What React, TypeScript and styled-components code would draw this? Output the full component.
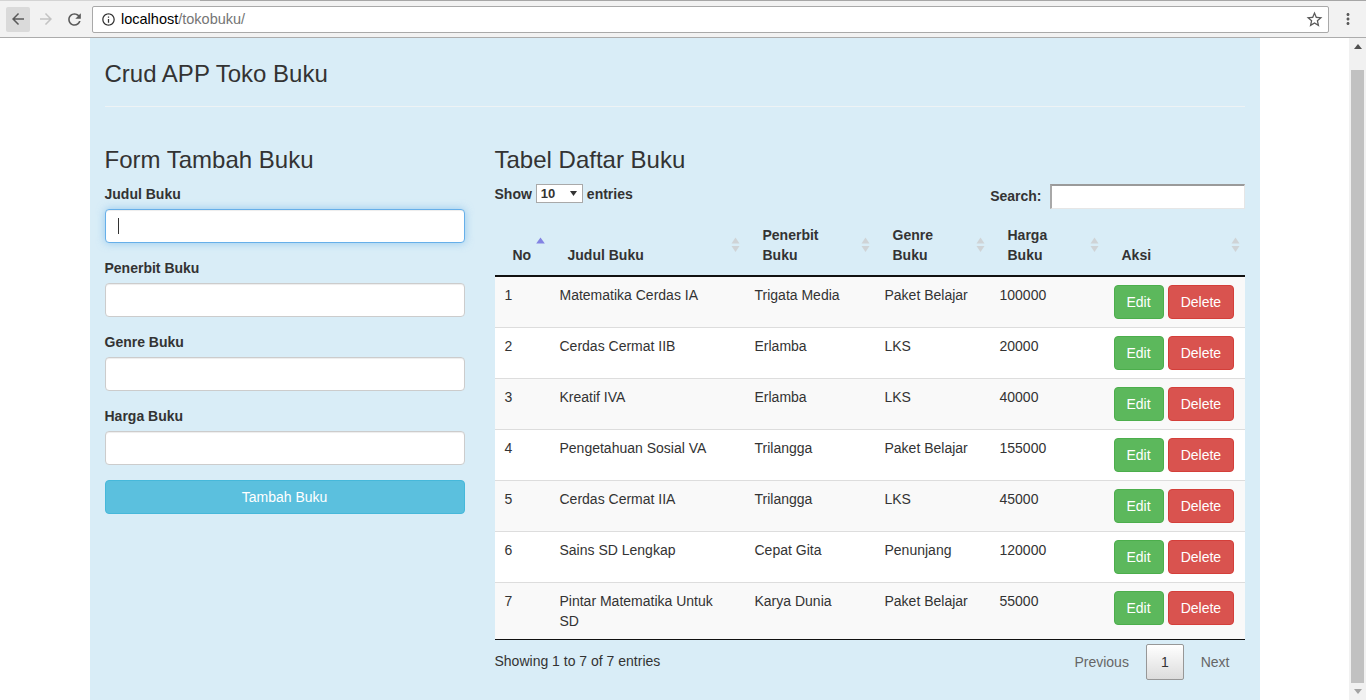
import React from 'react';
import styled, { createGlobalStyle } from 'styled-components';

const GlobalStyle = createGlobalStyle`
  html, body { margin: 0; padding: 0; height: 100%; overflow: hidden; }
  body {
    font-family: "Liberation Sans", Arial, Helvetica, sans-serif;
    font-size: 14px;
    line-height: 1.42857143;
    color: #333;
    background: #fff;
  }
  * { box-sizing: border-box; }
`;

/* ---------- browser chrome ---------- */
const Screen = styled.div`
  width: 1366px;
  height: 700px;
  display: flex;
  flex-direction: column;
  overflow: hidden;
`;

const TabEdge = styled.div`
  height: 1px;
  flex: none;
  background: linear-gradient(to right, #d4d4d4 0 200px, #a6a6a6 200px);
`;

const Toolbar = styled.div`
  height: 37px;
  flex: none;
  display: flex;
  align-items: center;
  padding: 0 6px;
  background: #f2f2f2;
  border-bottom: 1px solid #acacac;
`;

const NavButton = styled.div<{ $hover?: boolean }>`
  width: 24px;
  height: 25px;
  margin-right: 4px;
  border-radius: 2px;
  display: flex;
  align-items: center;
  justify-content: center;
  background: ${p => (p.$hover ? '#dadada' : 'transparent')};
`;

const Omnibox = styled.div`
  flex: 1;
  height: 27px;
  margin-left: 2px;
  margin-right: 7px;
  display: flex;
  align-items: center;
  padding: 0 4px 0 8px;
  background: #fff;
  border: 1px solid #a9a9a9;
  border-radius: 2px;
  font-size: 14.5px;
`;

const Url = styled.span`
  margin-left: 5px;
  flex: 1;
  color: #000;
`;

const UrlPath = styled.span`
  color: #757575;
`;

const MenuButton = styled.div`
  width: 24px;
  height: 25px;
  display: flex;
  align-items: center;
  justify-content: center;
`;

/* ---------- page area ---------- */
const Main = styled.div`
  flex: 1;
  display: flex;
  min-height: 0;
`;

const Viewport = styled.div`
  flex: 1;
  display: flex;
  justify-content: center;
  background: #fff;
  overflow: hidden;
`;

const Scrollbar = styled.div`
  width: 17px;
  flex: none;
  display: flex;
  flex-direction: column;
  align-items: center;
  background: #f1f1f1;
`;

const ScrollArrow = styled.div`
  height: 17px;
  width: 17px;
  display: flex;
  align-items: center;
  justify-content: center;
  flex: none;
`;

const ScrollThumb = styled.div`
  width: 13px;
  margin-top: 15px;
  height: 613px;
  background: #c1c1c1;
  flex: none;
`;

const ScrollSpacer = styled.div`
  flex: 1;
`;

const Container = styled.div`
  width: 1170px;
  flex: none;
  background: #d9edf7;
  padding: 0 15px;
`;

const PageHeader = styled.div`
  padding: 23px 0 19px;
  border-bottom: 1px solid #eef3f5;
`;

const H3 = styled.h3`
  margin: 0;
  font-size: 24px;
  font-weight: 500;
  line-height: 1.1;
  color: #333;
`;

const SectionTitle = styled(H3)`
  margin-bottom: 10px;
`;

const Row = styled.div`
  display: flex;
  gap: 30px;
  margin-top: 40px;
`;

const LeftCol = styled.div`
  width: 360px;
  flex: none;
`;

const RightCol = styled.div`
  width: 750px;
  flex: none;
`;

/* ---------- form ---------- */
const FormGroup = styled.div`
  margin-bottom: 15px;
`;

const Label = styled.label`
  display: block;
  font-weight: bold;
  margin-bottom: 5px;
`;

const InputWrap = styled.div`
  position: relative;
`;

const Input = styled.input<{ $focus?: boolean }>`
  display: block;
  width: 100%;
  height: 34px;
  padding: 6px 12px;
  font: inherit;
  color: #555;
  background: #fff;
  border: 1px solid ${p => (p.$focus ? '#66afe9' : '#ccc')};
  border-radius: 4px;
  outline: none;
  box-shadow: ${p =>
    p.$focus
      ? 'inset 0 1px 1px rgba(0,0,0,.075), 0 0 8px rgba(102,175,233,.6)'
      : 'inset 0 1px 1px rgba(0,0,0,.075)'};
`;

const Caret = styled.span`
  position: absolute;
  left: 13px;
  top: 9px;
  width: 1px;
  height: 16px;
  background: #333;
`;

const Button = styled.button<{ $variant: 'info' | 'success' | 'danger'; $block?: boolean }>`
  display: ${p => (p.$block ? 'block' : 'inline-block')};
  width: ${p => (p.$block ? '100%' : 'auto')};
  padding: 6px 12px;
  font-family: inherit;
  font-size: 14px;
  line-height: 20px;
  color: #fff;
  border-radius: 4px;
  cursor: pointer;
  border: 1px solid
    ${p => ({ info: '#46b8da', success: '#4cae4c', danger: '#d43f3a' }[p.$variant])};
  background: ${p => ({ info: '#5bc0de', success: '#5cb85c', danger: '#d9534f' }[p.$variant])};
`;

/* ---------- datatable ---------- */
const Controls = styled.div`
  display: flex;
  justify-content: space-between;
  align-items: flex-start;
  height: 25px;
`;

const LengthLabel = styled.div`
  display: flex;
  align-items: center;
  font-weight: bold;
  height: 20px;
`;

const FakeSelect = styled.div`
  width: 47px;
  height: 19px;
  margin: 0 4px;
  padding: 0 5px 0 4px;
  display: flex;
  align-items: center;
  justify-content: space-between;
  background: #fff;
  border: 1px solid #a9a9a9;
  font-size: 13px;
  font-weight: bold;
`;

const FilterLabel = styled.div`
  display: flex;
  align-items: center;
  font-weight: bold;
  height: 25px;
`;

const SearchInput = styled.input`
  width: 195px;
  height: 25px;
  margin-left: 8px;
  background: #fff;
  border-width: 2px 1px 1px 2px;
  border-style: solid;
  border-color: #9a9a9a #e6e6e6 #e6e6e6 #a8a8a8;
  outline: none;
  font: inherit;
`;

const Table = styled.table`
  width: 750px;
  margin-top: 6px;
  border-collapse: separate;
  border-spacing: 0;
  table-layout: fixed;
  border-bottom: 1px solid #111;
`;

const Th = styled.th<{ $w: number }>`
  position: relative;
  width: ${p => p.$w}px;
  padding: 10px 18px;
  text-align: left;
  vertical-align: bottom;
  font-weight: bold;
  white-space: pre-line;
  border-bottom: 2px solid #111;
`;

const SortIcon = styled.svg`
  position: absolute;
  right: 5px;
  top: 50%;
  margin-top: -8px;
`;

const Tbody = styled.tbody`
  tr:first-child td { border-top: none; }
`;

const Tr = styled.tr<{ $odd: boolean }>`
  background: ${p => (p.$odd ? '#f9f9f9' : '#fff')};
`;

const Td = styled.td`
  padding: 8px 10px;
  vertical-align: top;
  border-top: 1px solid #ddd;
  white-space: pre-line;
`;

const Actions = styled.div`
  display: flex;
  gap: 4px;
`;

const Footer = styled.div`
  display: flex;
  justify-content: space-between;
  align-items: flex-start;
`;

const Info = styled.div`
  padding-top: 11px;
`;

const Paginate = styled.div`
  display: flex;
  padding-top: 4px;
`;

const PageButton = styled.span<{ $current?: boolean }>`
  display: inline-block;
  min-width: 1.5em;
  margin-left: 2px;
  padding: 7px 14px;
  line-height: 20px;
  text-align: center;
  border-radius: 2px;
  border: 1px solid ${p => (p.$current ? '#979797' : 'transparent')};
  color: ${p => (p.$current ? '#333' : '#666')};
  background: ${p => (p.$current ? 'linear-gradient(to bottom, #fff 0%, #dcdcdc 100%)' : 'transparent')};
`;

/* ---------- icons ---------- */
const Svg = ({ d, size, color }: { d: string; size: number; color: string }) => (
  <svg width={size} height={size} viewBox="0 0 24 24">
    <path d={d} fill={color} />
  </svg>
);

const ICONS = {
  back: 'M20 11H7.83l5.59-5.59L12 4l-8 8 8 8 1.41-1.41L7.83 13H20v-2z',
  forward: 'M12 4l-1.41 1.41L16.17 11H4v2h12.17l-5.58 5.59L12 20l8-8z',
  reload:
    'M17.65 6.35C16.2 4.9 14.21 4 12 4c-4.42 0-7.99 3.58-7.99 8s3.57 8 7.99 8c3.73 0 6.84-2.55 7.73-6h-2.08c-.82 2.33-3.04 4-5.650 4-3.31 0-6-2.69-6-6s2.69-6 6-6c1.66 0 3.14.69 4.22 1.78L13 11h7V4l-2.35 2.35z',
  info:
    'M11 7h2v2h-2zm0 4h2v6h-2zm1-9C6.48 2 2 6.48 2 12s4.48 10 10 10 10-4.48 10-10S17.52 2 12 2zm0 18c-4.41 0-8-3.59-8-8s3.59-8 8-8 8 3.59 8 8-3.59 8-8 8z',
  star:
    'M22 9.24l-7.19-.62L12 2 9.19 8.63 2 9.24l5.46 4.73L5.82 21 12 17.27 18.18 21l-1.63-7.03L22 9.24zM12 15.4l-3.76 2.27 1-4.28-3.32-2.88 4.38-.38L12 6.1l1.71 4.04 4.38.38-3.32 2.88 1 4.28L12 15.4z',
  more:
    'M12 8c1.1 0 2-.9 2-2s-.9-2-2-2-2 .9-2 2 .9 2 2 2zm0 2c-1.1 0-2 .9-2 2s.9 2 2 2 2-.9 2-2-.9-2-2-2zm0 6c-1.1 0-2 .9-2 2s.9 2 2 2 2-.9 2-2-.9-2-2-2z',
};

const Sort = ({ kind }: { kind: 'asc' | 'both' }) => (
  <SortIcon width="9" height="16" viewBox="0 0 9 16">
    {kind === 'asc' ? (
      <polygon points="4.5,0.5 8.8,6.5 0.2,6.5" fill="#8383e3" />
    ) : (
      <>
        <polygon points="4.5,0.5 8.5,6.5 0.5,6.5" fill="#cfd3d6" />
        <polygon points="0.5,9 8.5,9 4.5,15" fill="#cfd3d6" />
      </>
    )}
  </SortIcon>
);

/* ---------- data ---------- */
type Book = { no: number; judul: string; penerbit: string; genre: string; harga: string };

const books: Book[] = [
  { no: 1, judul: 'Matematika Cerdas IA', penerbit: 'Trigata Media', genre: 'Paket Belajar', harga: '100000' },
  { no: 2, judul: 'Cerdas Cermat IIB', penerbit: 'Erlamba', genre: 'LKS', harga: '20000' },
  { no: 3, judul: 'Kreatif IVA', penerbit: 'Erlamba', genre: 'LKS', harga: '40000' },
  { no: 4, judul: 'Pengetahuan Sosial VA', penerbit: 'Trilangga', genre: 'Paket Belajar', harga: '155000' },
  { no: 5, judul: 'Cerdas Cermat IIA', penerbit: 'Trilangga', genre: 'LKS', harga: '45000' },
  { no: 6, judul: 'Sains SD Lengkap', penerbit: 'Cepat Gita', genre: 'Penunjang', harga: '120000' },
  { no: 7, judul: 'Pintar Matematika Untuk\nSD', penerbit: 'Karya Dunia', genre: 'Paket Belajar', harga: '55000' },
];

const columns: { label: string; w: number; sort: 'asc' | 'both' }[] = [
  { label: 'No', w: 55, sort: 'asc' },
  { label: 'Judul Buku', w: 195, sort: 'both' },
  { label: 'Penerbit\nBuku', w: 130, sort: 'both' },
  { label: 'Genre\nBuku', w: 115, sort: 'both' },
  { label: 'Harga\nBuku', w: 114, sort: 'both' },
  { label: 'Aksi', w: 141, sort: 'both' },
];

const fields = ['Judul Buku', 'Penerbit Buku', 'Genre Buku', 'Harga Buku'];

export default function App() {
  return (
    <>
      <GlobalStyle />
      <Screen>
        <TabEdge />
        <Toolbar>
          <NavButton $hover>
            <Svg d={ICONS.back} size={18} color="#5a5a5a" />
          </NavButton>
          <NavButton>
            <Svg d={ICONS.forward} size={18} color="#c3c3c3" />
          </NavButton>
          <NavButton>
            <Svg d={ICONS.reload} size={19} color="#5a5a5a" />
          </NavButton>
          <Omnibox>
            <Svg d={ICONS.info} size={15} color="#333" />
            <Url>
              localhost<UrlPath>/tokobuku/</UrlPath>
            </Url>
            <Svg d={ICONS.star} size={19} color="#5a5a5a" />
          </Omnibox>
          <MenuButton>
            <Svg d={ICONS.more} size={18} color="#5a5a5a" />
          </MenuButton>
        </Toolbar>
        <Main>
          <Viewport>
            <Container>
              <PageHeader>
                <H3>Crud APP Toko Buku</H3>
              </PageHeader>
              <Row>
                <LeftCol>
                  <SectionTitle>Form Tambah Buku</SectionTitle>
                  {fields.map((f, i) => (
                    <FormGroup key={f}>
                      <Label>{f}</Label>
                      <InputWrap>
                        <Input $focus={i === 0} type="text" readOnly />
                        {i === 0 && <Caret />}
                      </InputWrap>
                    </FormGroup>
                  ))}
                  <Button $variant="info" $block>
                    Tambah Buku
                  </Button>
                </LeftCol>
                <RightCol>
                  <SectionTitle>Tabel Daftar Buku</SectionTitle>
                  <Controls>
                    <LengthLabel>
                      Show
                      <FakeSelect>
                        <span>10</span>
                        <svg width="7" height="5" viewBox="0 0 7 5">
                          <polygon points="0,0 7,0 3.5,5" fill="#333" />
                        </svg>
                      </FakeSelect>
                      entries
                    </LengthLabel>
                    <FilterLabel>
                      Search:
                      <SearchInput type="search" readOnly />
                    </FilterLabel>
                  </Controls>
                  <Table>
                    <thead>
                      <tr>
                        {columns.map(c => (
                          <Th key={c.label} $w={c.w}>
                            {c.label}
                            <Sort kind={c.sort} />
                          </Th>
                        ))}
                      </tr>
                    </thead>
                    <Tbody>
                      {books.map((b, i) => (
                        <Tr key={b.no} $odd={i % 2 === 0}>
                          <Td>{b.no}</Td>
                          <Td>{b.judul}</Td>
                          <Td>{b.penerbit}</Td>
                          <Td>{b.genre}</Td>
                          <Td>{b.harga}</Td>
                          <Td>
                            <Actions>
                              <Button $variant="success">Edit</Button>
                              <Button $variant="danger">Delete</Button>
                            </Actions>
                          </Td>
                        </Tr>
                      ))}
                    </Tbody>
                  </Table>
                  <Footer>
                    <Info>Showing 1 to 7 of 7 entries</Info>
                    <Paginate>
                      <PageButton>Previous</PageButton>
                      <PageButton $current>1</PageButton>
                      <PageButton>Next</PageButton>
                    </Paginate>
                  </Footer>
                </RightCol>
              </Row>
            </Container>
          </Viewport>
          <Scrollbar>
            <ScrollArrow>
              <svg width="8" height="5" viewBox="0 0 8 5">
                <polygon points="4,0 8,5 0,5" fill="#505050" />
              </svg>
            </ScrollArrow>
            <ScrollThumb />
            <ScrollSpacer />
            <ScrollArrow>
              <svg width="8" height="5" viewBox="0 0 8 5">
                <polygon points="0,0 8,0 4,5" fill="#a3a3a3" />
              </svg>
            </ScrollArrow>
          </Scrollbar>
        </Main>
      </Screen>
    </>
  );
}
